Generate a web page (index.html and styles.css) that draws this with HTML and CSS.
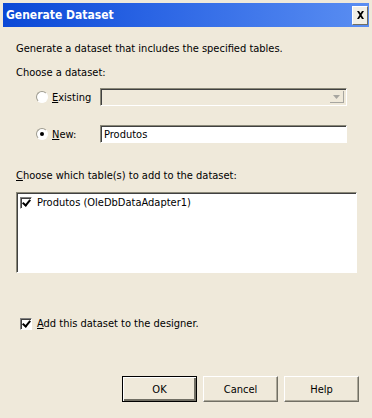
FILE: index.html
```html
<!DOCTYPE html>
<html>
<head>
    <title>Generate Dataset</title>
    <meta name="viewport" content="width=device-width" />
    <link rel="stylesheet" href="styles.css">
</head>
<body>

<div class="window">
    <div class="titlebar">
        <span class="title">Generate Dataset</span>
        <span class="close">
            <svg width="9" height="8" viewBox="0 0 9 8"><path d="M1 0h2l1.5 2.3L6 0h2L5.5 4 8 8H6L4.5 5.7 3 8H1l2.5-4z" fill="#000"/></svg>
        </span>
    </div>

    <div class="content">
        <p class="line intro">Generate a dataset that includes the specified tables.</p>
        <p class="line choose">Choose a dataset:</p>

        <div class="choice existing">
            <span class="radio"></span>
            <span class="choice-label"><u>E</u>xisting</span>
            <div class="combo">
                <span class="combo-btn">
                    <svg width="7" height="4" viewBox="0 0 7 4"><path d="M0 0h7L3.5 4z" fill="#a7a6a0"/></svg>
                </span>
            </div>
        </div>

        <div class="choice new">
            <span class="radio checked"></span>
            <span class="choice-label"><u>N</u>ew:</span>
            <div class="textbox">Produtos</div>
        </div>

        <p class="line tables"><u>C</u>hoose which table(s) to add to the dataset:</p>

        <div class="listbox">
            <div class="list-item">
                <span class="check checked"></span>
                <span>Produtos (OleDbDataAdapter1)</span>
            </div>
        </div>

        <div class="add-row">
            <span class="check checked"></span>
            <span><u>A</u>dd this dataset to the designer.</span>
        </div>

        <div class="buttons">
            <button class="btn default">OK</button>
            <button class="btn">Cancel</button>
            <button class="btn">Help</button>
        </div>
    </div>
</div>

</body>
</html>
```

FILE: styles.css
```css
body, html {
    margin: 0;
    padding: 0;
}

body {
    font-family: "DejaVu Sans Condensed", "Liberation Sans", sans-serif;
    font-size: 11px;
    color: #000;
    background: #efe9da;
}

.window {
    width: 372px;
    height: 418px;
    background: #efe9da;
    padding-top: 3px;
    box-sizing: border-box;
}

.titlebar {
    margin: 0 3px;
    height: 24px;
    display: flex;
    align-items: center;
    justify-content: space-between;
    background: linear-gradient(to right, #0a48d6, #2a64e4 40%, #5a8ef2);
}

.title {
    color: #fff;
    font-weight: bold;
    font-size: 12px;
    padding-left: 3px;
}

.close {
    width: 16px;
    height: 19px;
    margin-right: 1px;
    display: flex;
    align-items: center;
    justify-content: center;
    background: #f1efe6;
    border-top: 1px solid #fff;
    border-left: 1px solid #fff;
    border-right: 1px solid #716f64;
    border-bottom: 1px solid #716f64;
    box-sizing: border-box;
}

.content {
    padding-left: 16px;
}

.line {
    margin: 0;
    line-height: 13px;
    white-space: nowrap;
}

.intro {
    margin-top: 15px;
}

.choose {
    margin-top: 11px;
}

.choice {
    display: flex;
    align-items: center;
    padding-left: 20px;
}

.existing {
    margin-top: 9px;
}

.new {
    margin-top: 19px;
}

.radio {
    width: 12px;
    height: 12px;
    border-radius: 50%;
    box-sizing: border-box;
    background: #fff;
    border: 1px solid;
    border-color: #9d9b8f #fff #fff #9d9b8f;
    display: flex;
    align-items: center;
    justify-content: center;
}

.radio.checked::after {
    content: "";
    width: 4px;
    height: 4px;
    border-radius: 50%;
    background: #000;
}

.choice-label {
    width: 48px;
    padding-left: 4px;
}

.combo, .textbox {
    width: 247px;
    height: 18px;
    box-sizing: border-box;
    border: 1px solid;
    border-color: #8a8878 #fff #fff #8a8878;
    box-shadow: inset 1px 1px 0 #404040;
}

.combo {
    display: flex;
    justify-content: flex-end;
    padding: 2px;
}

.combo-btn {
    width: 14px;
    height: 12px;
    display: flex;
    align-items: center;
    justify-content: center;
    border-right: 1px solid #a7a6a0;
    border-bottom: 1px solid #a7a6a0;
    box-sizing: border-box;
}

.textbox {
    background: #fff;
    padding: 2px 0 0 3px;
    line-height: 13px;
}

.tables {
    margin-top: 26px;
}

.listbox {
    margin-top: 10px;
    width: 341px;
    height: 81px;
    box-sizing: border-box;
    background: #fff;
    border: 1px solid;
    border-color: #8a8878 #fff #fff #8a8878;
    box-shadow: inset 1px 1px 0 #404040;
    padding: 3px 0 0 3px;
}

.list-item, .add-row {
    display: flex;
    align-items: center;
    gap: 5px;
    line-height: 13px;
}

.check {
    width: 12px;
    height: 12px;
    box-sizing: border-box;
    background: #fff;
    border: 1px solid;
    border-color: #808080 #fff #fff #808080;
    box-shadow: inset 1px 1px 0 #404040;
    position: relative;
}

.check.checked::after {
    content: "";
    position: absolute;
    left: 3px;
    top: 0px;
    width: 3px;
    height: 6px;
    border-right: 2px solid #000;
    border-bottom: 2px solid #000;
    transform: rotate(40deg);
}

.add-row {
    margin-top: 44px;
    padding-left: 4px;
}

.buttons {
    margin-top: 46px;
    display: flex;
    gap: 6px;
    padding-left: 106px;
}

.btn {
    font-family: "DejaVu Sans Condensed", "Liberation Sans", sans-serif;
    font-size: 11px;
    width: 75px;
    height: 26px;
    background: #efe9da;
    border: 1px solid;
    border-color: #fff #716f64 #716f64 #fff;
    box-shadow: inset -1px -1px 0 #aca899;
    padding: 0;
    color: #000;
}

.btn.default {
    border: 1px solid #000;
    box-shadow: inset 1px 1px 0 #fff, inset -2px -2px 0 #716f64;
}
```
